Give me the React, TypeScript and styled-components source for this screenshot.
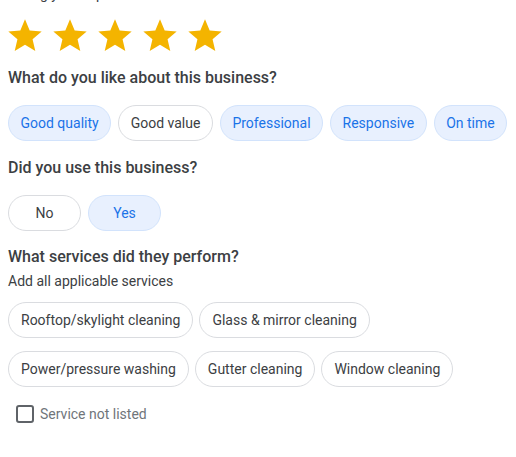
import * as React from 'react';
import styled, { createGlobalStyle } from 'styled-components';

const GlobalStyle = createGlobalStyle`
	html, body {
		margin: 0;
		padding: 0;
		background: #ffffff;
		overflow: hidden;
	}
	body {
		font-family: Roboto, 'Liberation Sans', Arial, sans-serif;
	}
`;

const StyledPage = styled.div`
	display: flex;
	flex-direction: column;
	margin-top: -16px;
	padding: 0 0 0 8px;
	width: 516px;
	box-sizing: border-box;
	color: #3c4043;
`;

const StyledIntro = styled.div`
	font-size: 14px;
	line-height: 20px;
	color: #3c4043;
`;

const StyledStars = styled.div`
	display: flex;
	gap: 5px;
	margin: 12px 0 0 -3px;
`;

const StyledStar = styled.svg`
	width: 40px;
	height: 40px;
	fill: #f4b400;
	flex: none;
`;

const StyledHeading = styled.div<{ top: number }>`
	margin-top: ${props => props.top}px;
	font-size: 16px;
	font-weight: 500;
	line-height: 24px;
	color: #3c4043;
`;

const StyledHint = styled.div`
	margin-top: 2px;
	font-size: 14px;
	line-height: 20px;
	color: #3c4043;
`;

const StyledChipGroup = styled.div<{ top: number; gap: number }>`
	display: flex;
	flex-wrap: wrap;
	column-gap: ${props => props.gap}px;
	row-gap: 13px;
	margin-top: ${props => props.top}px;
`;

const StyledChip = styled.button<{ selected?: boolean; width?: number; pad?: number }>`
	box-sizing: border-box;
	height: 36px;
	min-width: ${props => (props.width ? `${props.width}px` : 'auto')};
	padding: 0 ${props => props.pad ?? 12}px;
	border-radius: 18px;
	border: 1px solid ${props => (props.selected ? '#d2e3fc' : '#dadce0')};
	background: ${props => (props.selected ? '#e8f0fe' : '#ffffff')};
	color: ${props => (props.selected ? '#1a73e8' : '#3c4043')};
	font-family: Roboto, 'Liberation Sans', Arial, sans-serif;
	font-size: 14px;
	line-height: 20px;
	white-space: nowrap;
	cursor: pointer;
`;

const StyledCheckRow = styled.label`
	display: flex;
	align-items: center;
	gap: 6px;
	margin: 18px 0 0 8px;
	font-size: 14px;
	line-height: 18px;
	color: #70757a;
`;

const StyledCheckbox = styled.span`
	box-sizing: border-box;
	width: 18px;
	height: 18px;
	border: 2px solid #5f6368;
	border-radius: 3px;
	flex: none;
`;

const Star = () => (
	<StyledStar viewBox="0 0 24 24">
		<path d="M12 17.27L18.18 21l-1.64-7.03L22 9.24l-7.19-.61L12 2 9.19 8.63 2 9.24l5.46 4.73L5.82 21z" />
	</StyledStar>
);

const likes = [
	{ name: 'Good quality', selected: true },
	{ name: 'Good value', selected: false },
	{ name: 'Professional', selected: true },
	{ name: 'Responsive', selected: true },
	{ name: 'On time', selected: true }
];

const services = [
	'Rooftop/skylight cleaning',
	'Glass & mirror cleaning',
	'Power/pressure washing',
	'Gutter cleaning',
	'Window cleaning'
];

const App = () => (
	<>
		<GlobalStyle />
		<StyledPage>
			<StyledIntro>Rating your experience</StyledIntro>
			<StyledStars>
				{[0, 1, 2, 3, 4].map(i => (
					<Star key={i} />
				))}
			</StyledStars>

			<StyledHeading top={10}>What do you like about this business?</StyledHeading>
			<StyledChipGroup top={15} gap={7}>
				{likes.map(like => (
					<StyledChip key={like.name} selected={like.selected} pad={11.5}>
						{like.name}
					</StyledChip>
				))}
			</StyledChipGroup>

			<StyledHeading top={15}>Did you use this business?</StyledHeading>
			<StyledChipGroup top={15} gap={7}>
				<StyledChip width={73}>No</StyledChip>
				<StyledChip width={73} selected>
					Yes
				</StyledChip>
			</StyledChipGroup>

			<StyledHeading top={14}>What services did they perform?</StyledHeading>
			<StyledHint>Add all applicable services</StyledHint>
			<StyledChipGroup top={11} gap={6}>
				{services.map(service => (
					<StyledChip key={service}>{service}</StyledChip>
				))}
			</StyledChipGroup>

			<StyledCheckRow>
				<StyledCheckbox />
				Service not listed
			</StyledCheckRow>
		</StyledPage>
	</>
);

export default App;
